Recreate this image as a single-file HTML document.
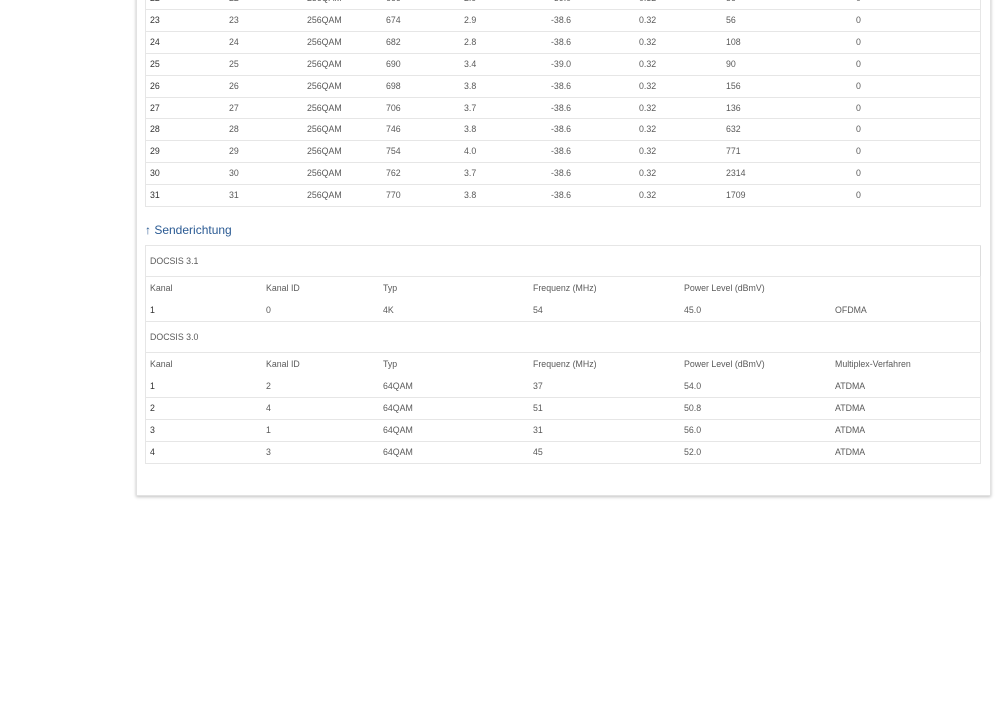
<!DOCTYPE html>
<html><head><meta charset="utf-8"><style>
body{margin:0;width:999px;height:706px;background:#fff;position:relative;overflow:hidden;font-family:"Liberation Sans",sans-serif;font-size:8.8px;color:#5a5a5a}
.panel{position:absolute;left:136px;top:-10px;width:853px;height:504px;background:#fff;border:1px solid #e2e2e2;box-shadow:0 1px 3px rgba(0,0,0,.25)}
.t{position:absolute;left:145px;width:836px;border:1px solid #e6e6e6;border-top:none;box-sizing:border-box}
.s{position:absolute;white-space:nowrap;line-height:10px}
.k{color:#333}
h{position:absolute;left:145px;top:223px;font-size:12px;color:#2a5a93;white-space:nowrap}
</style></head><body>
<div class="panel"></div>
<div class="t" style="top:-10px;height:217px"></div>
<div class="t" style="top:245px;height:219px;border-top:1px solid #e6e6e6"></div>
<h>↑ Senderichtung</h>
<div id="c"></div>
<script>
var o='';
function s(x,y,t,k){o+='<div class="s'+(k?' k':'')+'" style="left:'+x+'px;top:'+(y-5)+'px">'+t+'</div>';}
function line(y,x1,x2){o+='<div style="position:absolute;left:'+x1+'px;width:'+(x2-x1)+'px;top:'+y+'px;height:1px;background:#e6e6e6"></div>';}
var d=[[22,22,'256QAM',666,2.9,'-39.0',0.32,56,0],[23,23,'256QAM',674,'2.9','-38.6','0.32',56,0],[24,24,'256QAM',682,'2.8','-38.6','0.32',108,0],[25,25,'256QAM',690,'3.4','-39.0','0.32',90,0],[26,26,'256QAM',698,'3.8','-38.6','0.32',156,0],[27,27,'256QAM',706,'3.7','-38.6','0.32',136,0],[28,28,'256QAM',746,'3.8','-38.6','0.32',632,0],[29,29,'256QAM',754,'4.0','-38.6','0.32',771,0],[30,30,'256QAM',762,'3.7','-38.6','0.32',2314,0],[31,31,'256QAM',770,'3.8','-38.6','0.32',1709,0]];
var cx=[150,229,307,386,464,551,639,726,856];
for(var i=0;i<d.length;i++){var y=-2+i*21.9;for(var j=0;j<9;j++)s(cx[j],y,d[i][j],j==0);if(i>0)line(Math.round(y-11),146,980);}
var ux=[150,266,383,533,684,835];
line(276,146,980);line(321,146,980);line(352,146,980);
o+='<div style="position:absolute;left:980px;top:246px;width:1px;height:30px;background:#ddd"></div><div style="position:absolute;left:980px;top:322px;width:1px;height:30px;background:#ddd"></div>';
s(150,261,'DOCSIS 3.1');s(150,337,'DOCSIS 3.0');
var h=['Kanal','Kanal ID','Typ','Frequenz (MHz)','Power Level (dBmV)','Multiplex-Verfahren'];
for(j=0;j<5;j++)s(ux[j],288,h[j]);
var r1=['1','0','4K','54','45.0','OFDMA'];for(j=0;j<6;j++)s(ux[j],310,r1[j],j==0);
for(j=0;j<6;j++)s(ux[j],364,h[j]);
var u=[['1','2','64QAM','37','54.0','ATDMA'],['2','4','64QAM','51','50.8','ATDMA'],['3','1','64QAM','31','56.0','ATDMA'],['4','3','64QAM','45','52.0','ATDMA']];
for(i=0;i<4;i++){var y=386+i*22;for(j=0;j<6;j++)s(ux[j],y,u[i][j],j==0);if(i>0)line(y-11,146,980);}
document.getElementById('c').innerHTML=o;
</script>
</body></html>
